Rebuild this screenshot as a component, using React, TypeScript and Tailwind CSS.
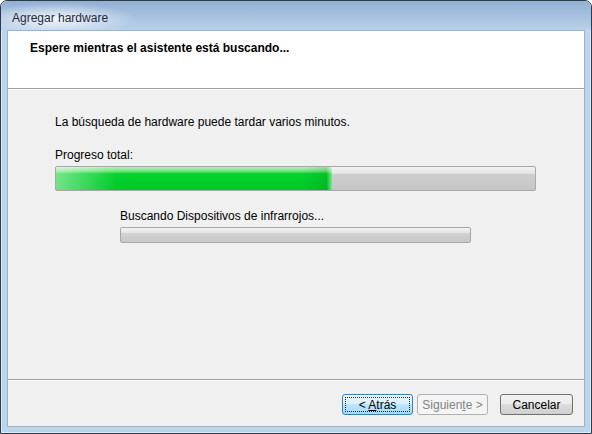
import React from "react";

const font = "font-['Segoe_UI','Liberation_Sans',Arial,sans-serif]";

const WizardButton: React.FC<{ children: React.ReactNode; variant?: "default" | "focused" | "disabled" }> = ({
    children,
    variant = "default",
}) => {
    if (variant === "disabled") {
        return (
            <button
                disabled
                className="w-[71px] h-[21px] rounded-[3px] border border-[#adb2b5] bg-[#f4f4f4] text-[12px] text-[#838383] leading-none"
            >
                {children}
            </button>
        );
    }
    if (variant === "focused") {
        return (
            <button className="w-[71px] h-[21px] rounded-[3px] border border-[#3c7fb1] bg-[linear-gradient(#eaf6fd_0%,#d9f0fc_50%,#bee6fd_50%,#a7d9f5_100%)] p-[2px] text-[12px] text-black leading-none">
                <span className="flex h-full w-full items-center justify-center border border-dotted border-[#222]">
                    <span>{children}</span>
                </span>
            </button>
        );
    }
    return (
        <button className="w-[73px] h-[21px] rounded-[3px] border border-[#707070] bg-[linear-gradient(#f2f2f2_0%,#ebebeb_50%,#dddddd_50%,#cfcfcf_100%)] text-[12px] text-black leading-none">
            {children}
        </button>
    );
};

const App: React.FC = () => {
    return (
        <div className={`w-[592px] h-[434px] ${font} text-[12px] text-black`}>
            <div className="flex h-full w-full flex-col rounded-t-[7px] border border-[#2e3b4a] bg-[#bcd4ec] px-[6px] pb-[6px] shadow-[inset_0_0_0_1px_rgba(255,255,255,0.5)]">
                {/* title bar */}
                <div className="flex h-[29px] items-center rounded-t-[6px] bg-[radial-gradient(ellipse_80px_16px_at_55px_62%,rgba(255,255,255,0.85),transparent),linear-gradient(#93b0d2,#b9d1ea)] -mx-[6px] px-[11px] pt-[5px]">
                    <span className="text-[12px] text-[#1e2b3a]">Agregar hardware</span>
                </div>

                {/* client area */}
                <div className="flex flex-1 flex-col border border-[#9cb3cc] bg-[#f0f0f0]">
                    <div className="h-[58px] border-b border-[#a0a0a0] bg-white pl-[22px] pt-[8px]">
                        <h1 className="text-[12px] font-bold">Espere mientras el asistente está buscando...</h1>
                    </div>

                    <div className="flex-1 border-t border-white pl-[47px] pt-[23px]">
                        <p>La búsqueda de hardware puede tardar varios minutos.</p>
                        <p className="mt-[15px]">Progreso total:</p>
                        <div className="mt-[2px] h-[25px] w-[481px] overflow-hidden rounded-[2px] border border-[#a8a8a8] bg-[linear-gradient(#f3f3f3_0%,#e2e2e2_30%,#cdcdcd_32%,#c6c6c6_100%)]">
                            <div className="h-full w-[276px] bg-[linear-gradient(90deg,rgba(255,255,255,0.45)_0%,rgba(255,255,255,0)_22%,rgba(0,0,0,0)_90%,rgba(0,60,0,0.12)_98%,rgba(255,255,255,0.5)_100%),linear-gradient(#b8f0b8_0%,#6be67a_18%,#03d22c_30%,#00c828_100%)]" />
                        </div>

                        <div className="pl-[65px]">
                            <p className="mt-[16px]">Buscando Dispositivos de infrarrojos...</p>
                            <div className="mt-[2px] h-[16px] w-[351px] rounded-[2px] border border-[#a8a8a8] bg-[linear-gradient(#f3f3f3_0%,#e4e4e4_35%,#d0d0d0_40%,#c9c9c9_100%)]" />
                        </div>
                    </div>

                    <div className="flex h-[47px] items-start justify-end border-t border-[#a0a0a0] pr-[11px] pt-[14px] shadow-[inset_0_1px_0_#ffffff]">
                        <div className="flex gap-[4px]">
                            <WizardButton variant="focused">
                                {"< "}
                                <span className="underline">A</span>trás
                            </WizardButton>
                            <WizardButton variant="disabled">
                                Siguien<span className="underline">t</span>e {">"}
                            </WizardButton>
                        </div>
                        <div className="ml-[12px]">
                            <WizardButton>Cancelar</WizardButton>
                        </div>
                    </div>
                </div>
            </div>
        </div>
    );
};

export default App;
